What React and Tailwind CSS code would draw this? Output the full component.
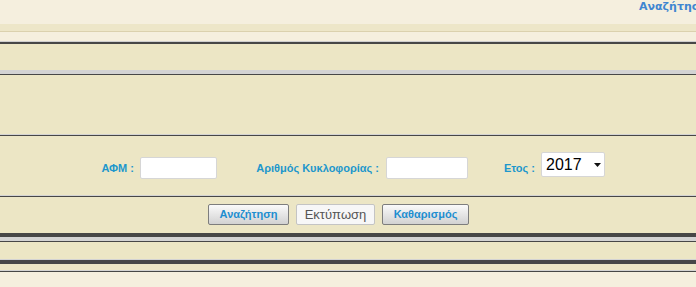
import React from 'react'

const band = 'bg-[#ece6c5]';

function Rule({ top = 'bg-[#d3d3d3]', dark = 'h-px' }) {
  return (
    <>
      <div className={`h-px ${top}`} />
      <div className={`${dark} bg-[#474747]`} />
    </>
  );
}

function Label({ children, className = '' }) {
  return (
    <span className={`text-right font-bold text-[11px] leading-[13px] text-[#1d97cc] whitespace-nowrap ${className}`}>
      {children}
    </span>
  );
}

function Btn({ children, disabled, className = '' }) {
  if (disabled) {
    return (
      <button className={`h-[21px] rounded-[2px] border border-[#c4c4c4] bg-[#f7f7f7] text-[13px] leading-[19px] text-[#555] ${className}`}>
        {children}
      </button>
    );
  }
  return (
    <button className={`h-[21px] rounded-[2px] border border-[#7d7d7d] bg-gradient-to-b from-[#fafafa] to-[#d2d2d2] font-bold text-[11px] leading-[19px] text-[#1d8ed0] ${className}`}>
      {children}
    </button>
  );
}

export default function App() {
  return (
    <div className="w-[696px] h-[287px] overflow-hidden bg-[#f5efde]" style={{ fontFamily: '"Liberation Sans", Arial, sans-serif' }}>
      {/* top link */}
      <div className="h-[24px] pl-[639px] overflow-hidden whitespace-nowrap">
        <a className="block pt-[1px] font-bold text-[11px] leading-[11px] text-[#3f86d1]" style={{ fontFamily: '"DejaVu Sans", Verdana, sans-serif' }}>Αναζήτηση</a>
      </div>
      <div className="h-[7px] bg-[#ede6c8]" />
      <div className="h-px bg-[#dbd1ae]" />
      <div className="h-[9px]" />
      <div className="h-px bg-[#cfcfcf]" />
      <div className="h-[2px] bg-[#474747]" />
      <div className={`h-[26px] ${band}`} />
      <div className="h-[4px] bg-[#d3d3d3]" />
      <div className="h-px bg-[#474747]" />
      <div className={`h-[59px] ${band}`} />
      <Rule />

      {/* form row */}
      <div className={`h-[59px] ${band} flex items-start pl-[40px]`}>
        <Label className="w-[94px] mt-[26px]">ΑΦΜ :</Label>
        <input className="ml-[6px] mt-[21px] w-[77px] h-[22px] bg-white border border-[#d6d6d6] rounded-[2px]" />
        <Label className="w-[162px] mt-[26px]">Αριθμός Κυκλοφορίας :</Label>
        <input className="ml-[7px] mt-[21px] w-[82px] h-[22px] bg-white border border-[#d6d6d6] rounded-[2px]" />
        <Label className="w-[67px] mt-[26px]">Ετος :</Label>
        <div className="ml-[6px] mt-[16px] w-[64px] h-[25px] bg-white border border-[#d6d6d6] rounded-[2px] flex items-center pl-[4px]">
          <span className="text-[16px] leading-[18px] text-black">2017</span>
          <svg className="ml-[12px]" width="7" height="4" viewBox="0 0 7 4">
            <path d="M0 0h7L3.5 4z" fill="#111" />
          </svg>
        </div>
      </div>
      <Rule />

      {/* buttons row */}
      <div className={`h-[36px] ${band} flex items-start pl-[208px] pt-[7px]`}>
        <Btn className="w-[81px]">Αναζήτηση</Btn>
        <Btn disabled className="ml-[7px] w-[79px]">Εκτύπωση</Btn>
        <Btn className="ml-[7px] w-[87px]">Καθαρισμός</Btn>
      </div>

      <div className="h-[4px] bg-[#474747]" />
      <div className="h-[4px] bg-[#d3d3d3]" />
      <div className="h-px bg-[#474747]" />
      <div className={`h-[17px] ${band}`} />
      <div className="h-px bg-[#d3d3d3]" />
      <div className="h-[4px] bg-[#474747]" />
      <div className={`h-[6px] ${band}`} />
      <Rule />
    </div>
  );
}
